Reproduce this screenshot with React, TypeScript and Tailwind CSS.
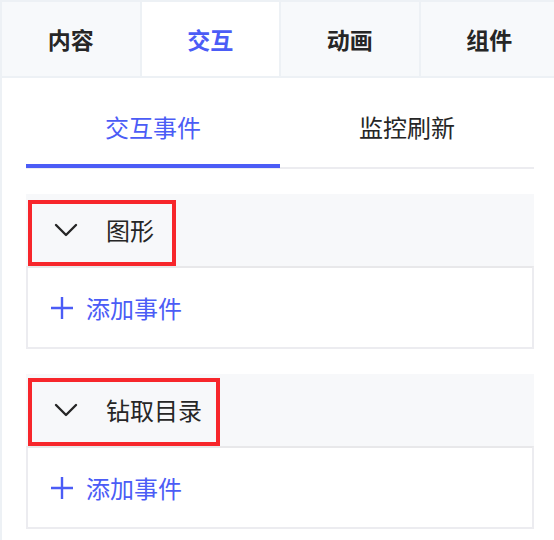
import React, { useState } from 'react';

const BLUE = 'text-[#4b5cf6]';

const tabs = ['内容', '交互', '动画', '组件'];
const subTabs = ['交互事件', '监控刷新'];

function Chevron() {
  return (
    <svg width="24" height="14" viewBox="0 0 24 14" fill="none" className="shrink-0">
      <path d="M2 2 L12 12 L22 2" stroke="#262626" strokeWidth="2.4" strokeLinecap="round" strokeLinejoin="round" />
    </svg>
  );
}

function Plus() {
  return (
    <svg width="24" height="24" viewBox="0 0 24 24" fill="none" className="shrink-0">
      <path d="M12 1 V23 M1 12 H23" stroke="#4b5cf6" strokeWidth="2.4" />
    </svg>
  );
}

function EventPanel({ title, markTop, markWidth }: { title: string; markTop: string; markWidth: string }) {
  return (
    <div className="mt-[25px]">
      {/* Header */}
      <div className="relative h-[72px] bg-[#f7f8fa] flex items-center pl-[28px] gap-[28px]">
        <Chevron />
        <span className="text-[24px] text-[#262626] leading-none">{title}</span>
        {/* annotation box */}
        <div className={`absolute left-[2px] bottom-0 border-4 border-[#f7262b] ${markTop} ${markWidth}`} />
      </div>
      {/* Body */}
      <div className="h-[83px] border-2 border-[#ececf0] border-t-[#e8e8ea] flex items-center pl-[22px] gap-[12px]">
        <Plus />
        <span className={`text-[24px] leading-none ${BLUE}`}>添加事件</span>
      </div>
    </div>
  );
}

export default function App() {
  const [tab, setTab] = useState(1);
  const [sub, setSub] = useState(0);

  return (
    <div
      className="w-[558px] min-h-[540px] bg-[#edf1f5] pl-[2px] pt-[2px] flex flex-col gap-[2px]"
      style={{ fontFamily: '"Noto Sans CJK SC", "Noto Sans", sans-serif' }}
    >
      {/* Top tabs */}
      <div className="grid grid-cols-4 gap-[2px] h-[74px]">
        {tabs.map((t, i) => (
          <button
            key={t}
            onClick={() => setTab(i)}
            className={`flex items-center justify-center text-[23px] font-bold ${
              i === tab ? 'bg-white text-[#4b5cf6]' : 'bg-[#f7f9fb] text-[#262626]'
            }`}
          >
            {t}
          </button>
        ))}
      </div>

      {/* Content */}
      <div className="flex-1 bg-white pl-[24px] pr-[24px] pb-[12px]">
        {/* Sub tabs */}
        <div className="flex h-[91px] border-b-2 border-[#ececf0]">
          {subTabs.map((s, i) => (
            <button
              key={s}
              onClick={() => setSub(i)}
              className={`relative flex-1 flex items-center justify-center pt-2 text-[24px] ${
                i === sub ? 'text-[#4b5cf6]' : 'text-[#262626]'
              }`}
            >
              {s}
              {i === sub && <span className="absolute left-0 right-0 bottom-[-1px] h-[4px] bg-[#4b5cf6]" />}
            </button>
          ))}
        </div>

        <EventPanel title="图形" markTop="top-[6px]" markWidth="w-[148px]" />
        <EventPanel title="钻取目录" markTop="top-[4px]" markWidth="w-[192px]" />
      </div>
    </div>
  );
}
